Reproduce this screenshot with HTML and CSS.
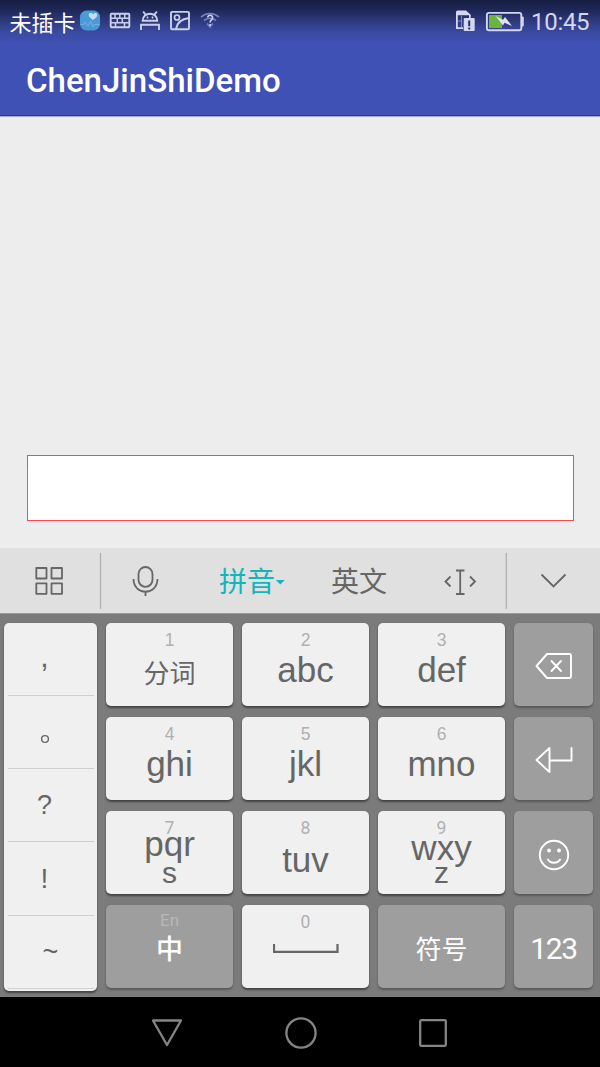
FILE: index.html
```
<!DOCTYPE html>
<html lang="zh">
<head>
<meta charset="utf-8">
<title>ChenJinShiDemo</title>
<link rel="stylesheet" href="styles.css">
</head>
<body>
<div class="screen">
  <header class="header">
    <div class="status">
      <span class="carrier">未插卡</span>
      <svg class="status-icons" width="142" height="24" viewBox="79 9 142 24" fill="none">
        <defs><linearGradient id="health" x2="0" y2="1"><stop stop-color="#4b9fd3"/><stop offset="1" stop-color="#4c95d5"/></linearGradient></defs>
        <rect x="80" y="10.500" width="20" height="20" rx="6.500" fill="url(#health)"/>
        <path d="M93 20c-3-2.200-4.300-3.400-4.300-5.100 0-2.400 3.100-2.600 4.300-.6 1.200-2 4.300-1.800 4.300.6 0 1.700-1.300 2.900-4.300 5.100z" fill="#c5dcf2"/>
        <path d="M80.500 24.500h3l1.500-2.500 3 4 2.500-5 2.500 5.500 1.500-2H99.500" stroke="#74b5e2" stroke-width=".9"/>
        <g stroke="#c9cfec" stroke-width="1.900">
          <rect x="110.700" y="13.800" width="18.600" height="13.400" rx=".8"/>
          <path d="M111 18.300h18M111 22.800h18M115 14v4M119.800 14v4M124.800 14v4M117.300 18v5M122.300 18v5M115.500 23v4M124.500 23v4" stroke-width="1.500"/>
          <path d="M142.700 20.700c0-9.200 14.600-9.200 14.600 0zM145.500 14.800l-2.300-3.300M154.500 14.800l2.300-3.300M141 30v-5.300h18V30"/>
          <path d="M146.700 17.500h1.600M151.700 17.500h1.600"/>
          <rect x="171" y="11.900" width="18" height="17.400" rx="1"/>
          <circle cx="177" cy="17.500" r="2.500" stroke-width="1.700"/><path d="M176 29c1-6 5-10 13-11"/>
        </g>
        <g stroke="#7380c4" stroke-width="1.700"><path d="M201 17.200c4.900-4.900 13.100-4.900 18 0M204 20.500c3.600-3 8.400-3 12 0M207 23.500l3 3.500 3-3.500"/></g>
        <path d="M207.700 17.600c0-3.300 4.900-3 4.900.1 0 2.200-2.500 2.300-2.500 4.700M210.100 24v2" stroke="#d0d5ef" stroke-width="1.600"/>
      </svg>
      <svg class="system-icons" width="70" height="24" viewBox="454 9 70 24" fill="none">
        <path d="M456 12.300V29h7v-1.700h-5.200v-12H469V18h1.700v-3.200L466 10.500h-8.300c-1 0-1.700.8-1.700 1.800z" fill="#d3d7ef"/>
        <path d="M461.500 16v11M458 21h4" stroke="#7e8acc" stroke-width="1"/>
        <rect x="463.700" y="18" width="11" height="13" rx="1" fill="#d3d7ef"/>
        <path d="M469.200 20.500v5.700M469.200 27.500v2" stroke="#26305f" stroke-width="2"/>
        <rect x="486.900" y="12.900" width="34.400" height="17.400" rx="2" stroke="#d3d7ef" stroke-width="1.900"/>
        <path d="M521.500 17h1.700v9h-1.700" fill="#d3d7ef" stroke="#d3d7ef" stroke-width="1"/>
        <path d="M489 15h13v13h-13z" fill="#6db33f"/>
        <path d="M495.500 16l7.500 3.700 2-2.700 7 9-7.500-3.200-1.500 2.700z" fill="#dde0f3"/>
      </svg>
      <span class="clock">10:45</span>
    </div>
    <h1 class="title">ChenJinShiDemo</h1>
  </header>
  <main class="content"><div class="field"><i class="caret"></i></div></main>
  <section class="keyboard">
    <div class="toolbar">
      <svg width="600" height="66" viewBox="0 548 600 66" class="tool-icons" fill="none" stroke="#666" stroke-width="1.800">
        <path d="M100.500 553v56M506.300 553v56" stroke="#adadad" stroke-width="1.200"/>
        <path d="M36.300 568h10.200v10.500H36.300zM51.500 568H62v10.500H51.500zM36.300 583.300h10.200v10.500H36.300zM51.500 583.300H62v10.500H51.500z" stroke-linejoin="round"/>
        <rect x="138.500" y="567" width="14" height="19.800" rx="7"/>
        <path d="M133.500 579c.3 17 23.700 17 24 0M145.500 591.500v4.500"/>
        <path d="M275.800 580h9l-4.500 4.500z" fill="#14b4ba" stroke="none"/>
        <path d="M456 570.500h8.500M460.200 570.500v23.500M456 594h8.500M450.500 576.500l-5 5 5 5M470 576.500l5 5-5 5"/>
        <path d="M541.500 574.500l12 12 12-12"/>
      </svg>
      <span class="mode mode-pinyin">拼音</span>
      <span class="mode mode-english">英文</span>
    </div>
    <div class="keys">
      <div class="side">
        <div class="mark"><span class="comma">,</span></div>
        <div class="mark"><svg width="10" height="10" viewBox="0 0 10 10" class="stop"><circle cx="5" cy="5" r="3.400" fill="none" stroke="#666" stroke-width="1.400"/></svg></div>
        <div class="mark"><span>?</span></div>
        <div class="mark"><span class="bang">!</span></div>
        <div class="mark"><span class="tilde">~</span></div>
      </div>
      <div class="grid">
        <div class="key"><span class="digit">1</span><span class="label cjk">分词</span></div>
        <div class="key"><span class="digit">2</span><span class="label">abc</span></div>
        <div class="key"><span class="digit">3</span><span class="label">def</span></div>
        <div class="key dark"><svg width="38" height="28" viewBox="0 0 38 28" class="delete" fill="none" stroke="#fff" stroke-width="1.900" stroke-linejoin="round"><path d="M1.500 14L12 2h22.500q1.500 0 1.500 1.500v21q0 1.500-1.500 1.500H12zM16.500 9l9.500 10M26 9l-9.500 10" stroke-linecap="round"/></svg></div>
        <div class="key"><span class="digit">4</span><span class="label low">ghi</span></div>
        <div class="key"><span class="digit">5</span><span class="label low">jkl</span></div>
        <div class="key"><span class="digit">6</span><span class="label low">mno</span></div>
        <div class="key dark"><svg width="38" height="28" viewBox="0 0 38 28" class="enter" fill="none" stroke="#fff" stroke-width="1.900" stroke-linejoin="round" stroke-linecap="round"><path d="M14.500 2v24L1.500 14zM14.500 14.500h22V2"/></svg></div>
        <div class="key"><span class="digit narrow">7</span><span class="label wrap-q">pqr</span><span class="label tail">s</span></div>
        <div class="key"><span class="digit narrow">8</span><span class="label lower">tuv</span></div>
        <div class="key"><span class="digit narrow">9</span><span class="label wrap-w">wxy</span><span class="label tail tail-z">z</span></div>
        <div class="key dark"><svg width="32" height="32" viewBox="0 0 32 32" class="smile" fill="none" stroke="#fff" stroke-width="1.900"><circle cx="16" cy="16" r="14.200"/><path d="M9.500 20c3 5 10 5 13 0"/><circle cx="11" cy="11.500" r="1.900" fill="#fff" stroke="none"/><circle cx="21" cy="11.500" r="1.900" fill="#fff" stroke="none"/></svg></div>
        <div class="key dark"><span class="digit en">En</span><span class="label cjk zh">中</span></div>
        <div class="key"><span class="digit narrow">0</span><svg width="66" height="10" viewBox="0 0 66 10" class="space"><path d="M1 0v7.800h63.500V0" fill="none" stroke="#666" stroke-width="2.200"/></svg></div>
        <div class="key dark"><span class="label cjk symbols">符号</span></div>
        <div class="key dark"><span class="label numbers">123</span></div>
      </div>
    </div>
  </section>
  <nav class="nav">
    <svg width="32" height="28" viewBox="0 0 32 28"><path d="M2 1.500h28L16 26z"/></svg>
    <svg width="32" height="32" viewBox="0 0 32 32"><circle cx="16" cy="16" r="14.600"/></svg>
    <svg width="28" height="28" viewBox="0 0 28 28"><rect x="1.200" y="1.200" width="25.600" height="25.600" rx="1"/></svg>
  </nav>
</div>
</body>
</html>
```
FILE: styles.css
```
* { box-sizing: border-box; }
body { margin: 0; font-family: "Liberation Sans", "Noto Sans CJK SC", sans-serif; }
.screen { width: 600px; height: 1067px; display: flex; flex-direction: column; overflow: hidden; background: #ededed; }
.header { height: 117px; flex: none; background: linear-gradient(#161d42 0, #1d2553 8px, #2c3879 20px, #3a4aa1 32px, #3f51b5 44px); border-bottom: 1px solid #9fa8d2; box-shadow: inset 0 -1px #24389e; }
.status { height: 42px; display: flex; align-items: center; color: #d3d7ef; }
.carrier { margin-left: 9.500px; width: 69.500px; font: 22px/40px "Noto Sans CJK SC", sans-serif; color: #fff; }
.system-icons { margin-left: 233px; }
.clock { margin-left: 7px; padding-top: 2px; font: 24px/42px Roboto, sans-serif; letter-spacing: -.3px; }
.title { margin: 18px 0 0 26px; font: 500 33px/41px Roboto, sans-serif; letter-spacing: .02px; color: #fff; }
.content { height: 431px; flex: none; padding: 338px 26px 0 27px; }
.field { height: 66px; background: #fff; border: 1px solid #ff4848; padding-top: 12px; }
.caret { display: block; width: 1px; height: 40px; margin-left: -1px; background: #14b4ba; }
.keyboard { height: 449px; flex: none; background: #7b7b7b; }
.toolbar { height: 66px; display: grid; grid-template-columns: 219px 112px 269px; background: #e0e0e0; border-bottom: 1px solid #9b9b9b; }
.tool-icons { grid-area: 1 / 1 / 2 / 4; }
.mode { grid-row: 1; font: 28px/64px "Noto Sans CJK SC", sans-serif; color: #666; }
.mode-pinyin { grid-column: 2; color: #14b4ba; }
.mode-english { grid-column: 3; }
.keys { display: flex; gap: 9px; padding: 8.500px 7px 0 4px; }
.side { width: 93.500px; height: 368px; padding: 0 3.500px; border-radius: 5px; background: #f0f0f0; box-shadow: 0 1.500px 2px #444; }
.mark { height: 73.300px; border-bottom: 1px solid #cfcfcf; display: flex; justify-content: center; padding: 21px 12px 0 0; color: #666; font-size: 27px; line-height: 30px; }
.comma { margin-top: -2px; font-size: 30px; }
.stop { margin-top: 17px; }
.bang { margin-top: 1px; font-size: 28px; }
.tilde { padding-left: 12px; }
.grid { display: grid; grid-template-columns: 127px 127px 127px 79px; grid-template-rows: 83px 83px 83px 83px; column-gap: 9px; row-gap: 11.300px; }
.key { display: flex; flex-direction: column; align-items: center; border-radius: 5px; background: #f0f0f0; box-shadow: 0 1.500px 2px #444; color: #666; }
.dark { background: #9e9e9e; color: #fff; box-shadow: 0 1.500px 2px #5a5a5a; }
.digit { height: 33px; font-size: 17.500px; line-height: 34px; color: #b0b0b0; }
.narrow { font-family: Roboto, sans-serif; }
.label { height: 28px; font-size: 35px; line-height: 28px; }
.low { margin-top: .7px; }
.lower { margin-top: 1.700px; }
.cjk { font: 26px/28px "Noto Sans CJK SC", sans-serif; margin-top: 2px; }
.wrap-q { margin-top: -14px; }
.tail { margin-top: .5px; font-size: 30px; }
.wrap-w { margin-top: -10px; }
.tail-z { margin-top: -3.500px; }
.en { height: 30px; font-family: Roboto, sans-serif; font-size: 17px; line-height: 30px; color: #b8b8b8; }
.zh { margin-top: -1px; font-size: 27px; font-weight: 500; }
.symbols { margin-top: 29px; }
.numbers { margin-top: 30px; font: 30px/28px Roboto, sans-serif; letter-spacing: -1.400px; }
.delete, .enter { margin-top: 29.500px; }
.smile { margin-top: 28px; }
.space { margin-top: 5.500px; }
.nav { height: 70px; flex: none; display: flex; align-items: center; justify-content: center; gap: 102px; padding: 1px 2px 0 0; background: #000; }
.nav svg { fill: none; stroke: #858585; stroke-width: 2.300; stroke-linejoin: round; }
```
